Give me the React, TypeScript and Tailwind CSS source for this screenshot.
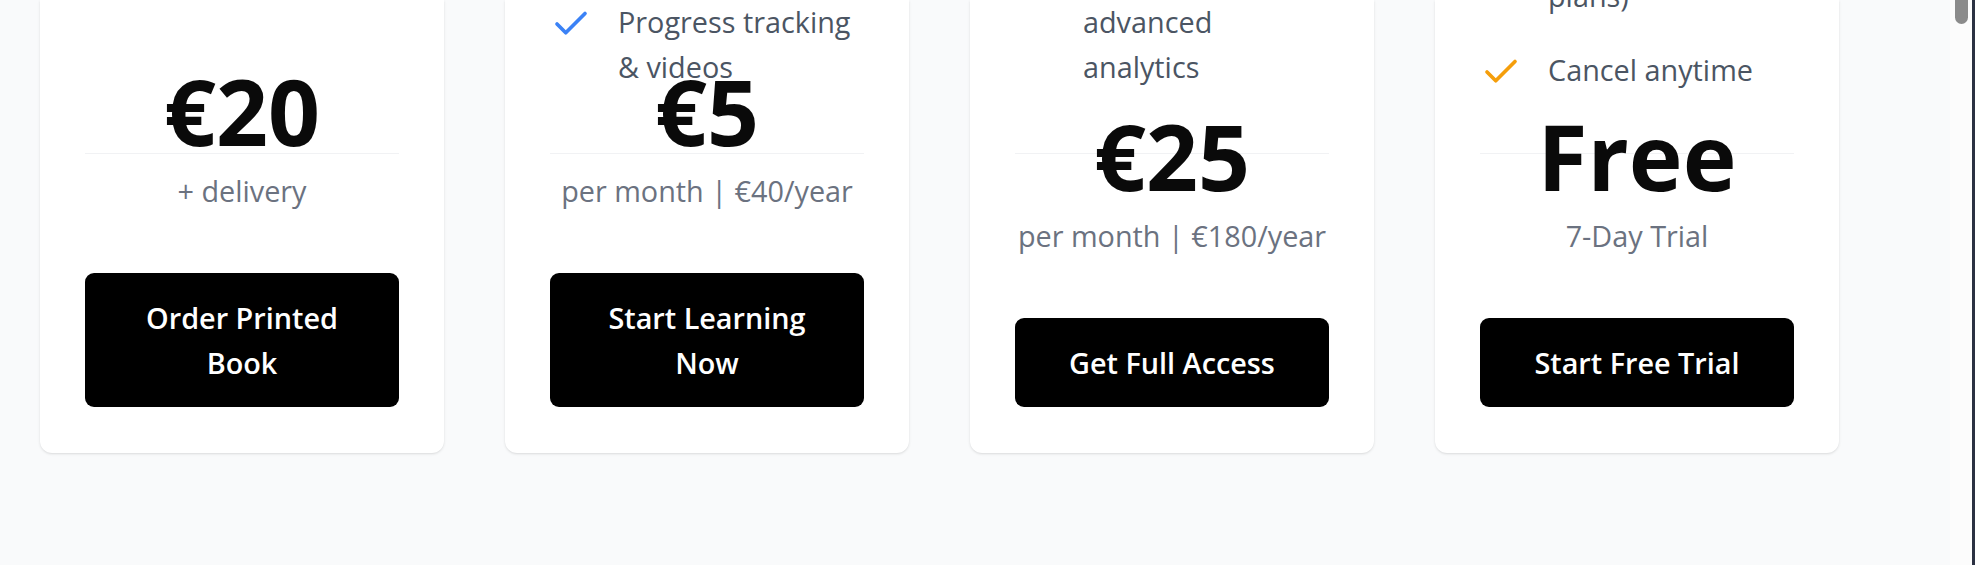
import React from "react";
import { Check } from "lucide-react";

// One visible feature entry: the tail end of each card's list
interface Feature {
  lines: string[];
  icon: boolean;
}

interface Plan {
  price: string;
  note: string;
  cta: string;
  accent: string;
  listOffset: string;
  features: Feature[];
}

const plans: Plan[] = [
  {
    price: "€20",
    note: "+ delivery",
    cta: "Order Printed Book",
    accent: "text-[#3b82f6]",
    listOffset: "",
    features: [],
  },
  {
    price: "€5",
    note: "per month | €40/year",
    cta: "Start Learning Now",
    accent: "text-[#3b82f6]",
    listOffset: "-mt-[1px]",
    features: [{ lines: ["Progress tracking", "& videos"], icon: true }],
  },
  {
    price: "€25",
    note: "per month | €180/year",
    cta: "Get Full Access",
    accent: "text-[#3b82f6]",
    listOffset: "-mt-[1px]",
    features: [{ lines: ["advanced", "analytics"], icon: false }],
  },
  {
    price: "Free",
    note: "7-Day Trial",
    cta: "Start Free Trial",
    accent: "text-[#f59e0b]",
    listOffset: "-mt-[27px]",
    features: [
      { lines: ["plans)"], icon: false },
      { lines: ["Cancel anytime"], icon: true },
    ],
  },
];

const FeatureItem: React.FC<{ feature: Feature; accent: string }> = ({
  feature,
  accent,
}) => (
  <li className="flex gap-[26px]">
    {feature.icon ? (
      <Check className={`mt-[4px] size-[42px] shrink-0 ${accent}`} strokeWidth={2.1} />
    ) : (
      <span className="w-[42px] shrink-0" />
    )}
    <span className="flex flex-col">
      {feature.lines.map((line) => (
        <span key={line} className="block whitespace-nowrap">
          {line}
        </span>
      ))}
    </span>
  </li>
);

const PlanCard: React.FC<{ plan: Plan }> = ({ plan }) => (
  <div className="relative flex h-[453px] w-[404px] shrink-0 flex-col rounded-b-[12px] bg-white px-[45px] pb-[46px] shadow-sm">
    <div className="absolute left-[45px] right-[45px] top-[153px] h-px bg-[#f1f2f4]" />

    {/* the list may run into the price block, as in the original */}
    <div className="min-h-0 flex-1">
      {plan.features.length > 0 && (
        <ul
          className={`flex flex-col gap-[29px] text-[28.8px] leading-[45px] text-[#4b5563] ${plan.listOffset}`}
        >
          {plan.features.map((f) => (
            <FeatureItem key={f.lines[0]} feature={f} accent={plan.accent} />
          ))}
        </ul>
      )}
    </div>

    <div className="relative flex shrink-0 flex-col items-center text-center">
      <p className="text-[91px] font-bold leading-none text-[#0a0a0a]">
        {plan.price}
      </p>
      <p className="mt-[11px] text-[28.8px] leading-[45px] text-[#6b7280]">
        {plan.note}
      </p>
      <button className="mt-[60px] w-full rounded-[9px] bg-black px-[40px] py-[22px] text-[28.8px] font-semibold leading-[45px] text-white">
        {plan.cta}
      </button>
    </div>
  </div>
);

export default function App() {
  return (
    <div className="flex h-[565px] w-full overflow-hidden bg-[#f9fafb] font-['Open_Sans',sans-serif]">
      <main className="flex flex-1 items-start gap-[61px] pl-[40px]">
        {plans.map((plan) => (
          <PlanCard key={plan.cta} plan={plan} />
        ))}
      </main>

      {/* browser scrollbar */}
      <div className="w-[22px] shrink-0 bg-[#fcfcfc] pl-[5px]">
        <div className="h-[24px] w-[13px] rounded-b-full bg-[#8b8b8b]" />
      </div>
      <div className="w-[3px] shrink-0 bg-[#2b3142]" />
    </div>
  );
}
